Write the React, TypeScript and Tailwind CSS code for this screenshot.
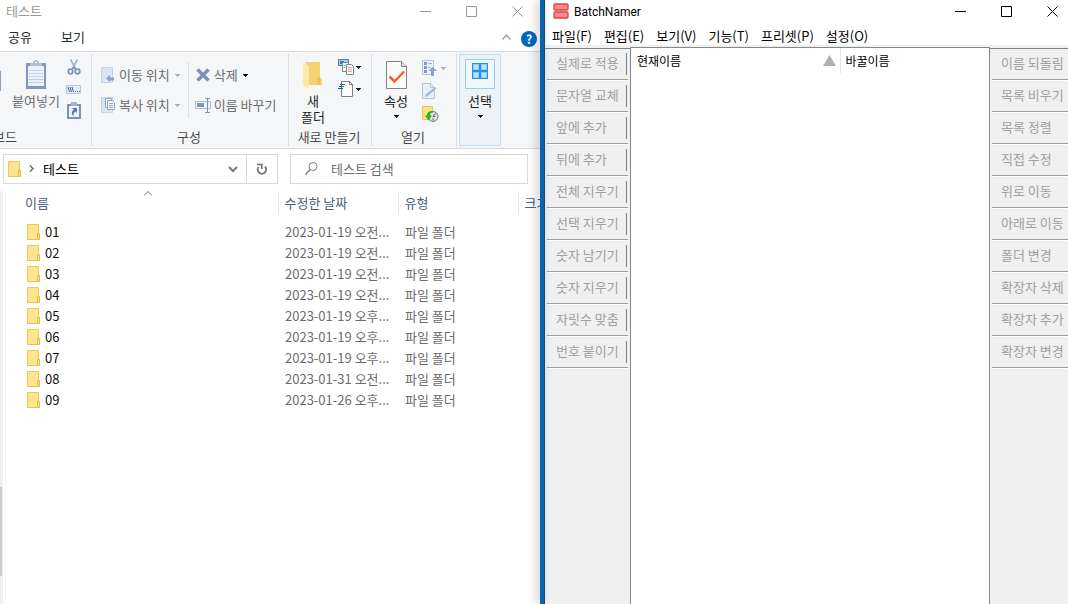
import type { ReactNode } from "react";

type FileRow = {
  name: string;
  date: string;
};

const FILES: FileRow[] = [
  { name: "01", date: "2023-01-19 오전..." },
  { name: "02", date: "2023-01-19 오전..." },
  { name: "03", date: "2023-01-19 오전..." },
  { name: "04", date: "2023-01-19 오전..." },
  { name: "05", date: "2023-01-19 오후..." },
  { name: "06", date: "2023-01-19 오후..." },
  { name: "07", date: "2023-01-19 오후..." },
  { name: "08", date: "2023-01-31 오전..." },
  { name: "09", date: "2023-01-26 오후..." },
];

const MENUS = ["파일(F)", "편집(E)", "보기(V)", "기능(T)", "프리셋(P)", "설정(O)"];

const LEFT_ACTIONS = [
  "실제로 적용",
  "문자열 교체",
  "앞에 추가",
  "뒤에 추가",
  "전체 지우기",
  "선택 지우기",
  "숫자 남기기",
  "숫자 지우기",
  "자릿수 맞춤",
  "번호 붙이기",
];

const RIGHT_ACTIONS = [
  "이름 되돌림",
  "목록 비우기",
  "목록 정렬",
  "직접 수정",
  "위로 이동",
  "아래로 이동",
  "폴더 변경",
  "확장자 삭제",
  "확장자 추가",
  "확장자 변경",
];

function WindowButtons() {
  return (
    <div className="flex gap-4">
      <button aria-label="최소화" className="flex h-[22px] w-[30px] items-center justify-center">
        <svg width="11" height="11" stroke="currentColor" fill="none"><path d="M0 5.5h11" /></svg>
      </button>
      <button aria-label="최대화" className="flex h-[22px] w-[30px] items-center justify-center">
        <svg width="11" height="11" stroke="currentColor" fill="none"><path d="M.5 .5h10v10h-10z" /></svg>
      </button>
      <button aria-label="닫기" className="flex h-[22px] w-[30px] items-center justify-center">
        <svg width="11" height="11" stroke="currentColor" fill="none"><path d="M.5 .5l10 10M10.5 .5l-10 10" /></svg>
      </button>
    </div>
  );
}

function DropArrow({ className = "" }: { className?: string }) {
  return (
    <svg width="5" height="3" className={`shrink-0 ${className}`} fill="currentColor" shapeRendering="crispEdges">
      <path d="M0 0h5v1H0zM1 1h3v1H1zM2 2h1v1H2z" />
    </svg>
  );
}

function RibbonGroup({ label, className = "", children }: { label: string; className?: string; children: ReactNode }) {
  return (
    <div className={`flex shrink-0 flex-col border-r border-[#dcdfe2] ${className}`}>
      <div className="flex h-[75px] items-start">{children}</div>
      <div className="pr-[2px] text-center leading-4 text-[#4a4a4a]">{label}</div>
    </div>
  );
}

function FolderIcon() {
  return (
    <svg width="14" height="16" viewBox="0 0 14 16" className="shrink-0">
      <path d="M.5 .5h11v15H.5z" fill="#ffe591" stroke="#eccb55" />
      <path d="M10.5 9.5h2v6h-2z" fill="#ffe38a" stroke="#e3bb3e" />
      <path d="M.5 15.5h12" stroke="#e9c44c" />
    </svg>
  );
}

function ClipboardIcon() {
  return (
    <svg width="20" height="29" viewBox="0 0 20 29">
      <path d="M0 3h20v26H0z" fill="#8196bd" />
      <path d="M2 6h16v20H2z" fill="#eaf2fb" />
      <path d="M3 10.5h14M3 13.5h14M3 16.5h14M3 19.5h14M3 22.5h14" stroke="#c3d3ea" />
      <path d="M4 6V3h3c0-4 6-4 6 0h3v3z" fill="#b3bfd2" />
      <path d="M9 2h2v1H9z" fill="#fff" />
    </svg>
  );
}

function ScissorsIcon() {
  return (
    <svg width="14" height="16" viewBox="0 0 14 16" fill="none">
      <path d="M3.5 .5l5 9M10.5 .5l-5 9" stroke="#9fb0cb" strokeWidth="1.6" />
      <circle cx="3.5" cy="12.5" r="2.3" stroke="#7c91b6" strokeWidth="1.7" />
      <circle cx="10.5" cy="12.5" r="2.3" stroke="#7c91b6" strokeWidth="1.7" />
      <path d="M5 10.5l2-2 2 2" stroke="#7c91b6" strokeWidth="1.5" />
    </svg>
  );
}

function PathIcon() {
  return (
    <svg width="15" height="9" viewBox="0 0 15 9">
      <path d="M.5 .5h14v8H.5z" fill="#e3edf9" stroke="#b7c9e2" />
      <path d="M2 2l1.500 5M4 2l1.500 5M6 2l1.500 5" stroke="#4a6694" fill="none" />
      <path d="M9 6h1v1H9zM11 6h1v1h-1zM13 6h1v1h-1z" fill="#4a6694" />
    </svg>
  );
}

function PasteShortcutIcon() {
  return (
    <svg width="14" height="17" viewBox="0 0 14 17">
      <path d="M0 2h14v15H0z" fill="#7c92b9" />
      <path d="M2 4h10v11H2z" fill="#eaf2fb" />
      <path d="M4 0h6v4H4z" fill="#a4b3cc" />
      <path d="M5 6h5v5L8.5 9.5C7 10.500 6.500 11.500 6.500 14 4 12 4.500 9 6.800 7.800z" fill="#5f79a8" />
    </svg>
  );
}

function MoveToIcon() {
  return (
    <svg width="14" height="16" viewBox="0 0 14 16">
      <path d="M.5 .5h11v15H.5z" fill="#dbe6f5" stroke="#c5d4e9" />
      <path d="M5 11.5L9 8v2.5h4v3H9V15z" fill="#8ba0c4" />
    </svg>
  );
}

function CopyToIcon() {
  return (
    <svg width="14" height="16" viewBox="0 0 14 16">
      <path d="M.5 .5h11v15H.5z" fill="#dbe6f5" stroke="#c5d4e9" />
      <path d="M4.5 1.5h6v9h-6z" fill="#f3f7fc" stroke="#92a6c7" />
      <path d="M6.5 3.5h5l2 2v7h-7z" fill="#f3f7fc" stroke="#92a6c7" />
      <path d="M8 6.5h4M8 8.5h4M8 10.5h4" stroke="#92a6c7" />
    </svg>
  );
}

function DeleteIcon() {
  return (
    <svg width="14" height="14" viewBox="0 0 14 14">
      <path d="M1.5 1.5l11 11M12.5 1.5l-11 11" stroke="#7d91b5" strokeWidth="3.5" />
    </svg>
  );
}

function RenameIcon() {
  return (
    <svg width="16" height="15" viewBox="0 0 16 15" fill="none">
      <path d="M.5 3.5h15v7H.5z" fill="#edf3fa" stroke="#a9bad5" />
      <path d="M2 5h7v4H2z" fill="#7f96bf" />
      <path d="M12.5 1v13M10 .5h5M10 14.5h5" stroke="#7f93b8" />
    </svg>
  );
}

function BigFolderIcon() {
  return (
    <svg width="20" height="28" viewBox="0 0 20 28">
      <path d="M3 1h14v15l2 3v5H3z" fill="#f5d271" />
      <path d="M0 1l6 5v22l-6-4z" fill="#ffe9a9" />
      <path d="M14 16h3v8h-3z" fill="#efc456" />
    </svg>
  );
}

function NewItemIcon() {
  return (
    <svg width="16" height="16" viewBox="0 0 16 16">
      <path d="M.5 .5h10v6H.5z" fill="#9bd3f3" stroke="#4b7f9e" />
      <path d="M2 2h4v3H2z" fill="#2f82b5" />
      <path d="M4.5 3.5h6v9h-6z" fill="#fff" stroke="#858585" />
      <path d="M8.5 5.5h5l2 2v8h-7z" fill="#fff" stroke="#858585" />
      <path d="M10 8.5h4M10 10.5h4M10 12.5h4" stroke="#e8a196" />
      <path d="M5.5 6.5h2M5.5 8.5h2" stroke="#7ba8d0" />
    </svg>
  );
}

function EasyAccessIcon() {
  return (
    <svg width="16" height="16" viewBox="0 0 16 16">
      <path d="M3.5 .5h8l3 3v12h-11z" fill="#fbfbfb" stroke="#7d7d7d" />
      <path d="M11.5 .5v3h3" fill="none" stroke="#7d7d7d" />
      <path d="M2 3.5h5M1 5.5h5M0 7.5h5" stroke="#1d5fa3" strokeWidth="1.2" />
    </svg>
  );
}

function PropertiesIcon() {
  return (
    <svg width="21" height="28" viewBox="0 0 21 28">
      <path d="M.5 .5h15l5 5v22H.5z" fill="#fcfcfc" stroke="#838383" />
      <path d="M15.5 .5v5h5" fill="#e3e3e3" stroke="#838383" />
      <path d="M3.5 15.5l5 5L18 10.5" fill="none" stroke="#f4611c" strokeWidth="2.5" />
    </svg>
  );
}

function OpenIcon() {
  return (
    <svg width="16" height="16" viewBox="0 0 16 16">
      <path d="M.5 .5h11v14H.5z" fill="#eaf1fa" stroke="#b4c4dc" />
      <path d="M2 2h3v3H2zM2 6h3v3H2zM2 10h3v3H2z" fill="#8499bf" />
      <path d="M6 3.5h4M6 7.5h3" stroke="#a3b4cf" />
      <path d="M10.5 7L15 11h-3v5H9v-5H6.5z" fill="#8fa2c4" />
    </svg>
  );
}

function EditIcon() {
  return (
    <svg width="16" height="16" viewBox="0 0 16 16">
      <path d="M.5 .5h8l4 4v11H.5z" fill="#e8f0fa" stroke="#b4c4dc" />
      <path d="M8.500 .5v4h4" fill="none" stroke="#b4c4dc" />
      <path d="M3 14l1-3 9-7 1.500 1.500L6 13z" fill="#a9bad6" />
    </svg>
  );
}

function HistoryIcon() {
  return (
    <svg width="17" height="16" viewBox="0 0 17 16">
      <path d="M.5 .5h10v13H.5z" fill="#ffe184" stroke="#e8c552" />
      <circle cx="11" cy="10.5" r="5" fill="#e0e0e0" stroke="#777" />
      <path d="M11 10.5l2.500-3M11 10.500h2M11 12.500v2" stroke="#555" />
      <path d="M11 5C7 4.500 5 6.500 4.800 9.500H3l3.500 5 3.500-5H8C8 7.500 9 6.500 11 6.500z" fill="#27b22f" />
    </svg>
  );
}

function SelectGridIcon() {
  return (
    <svg width="16" height="16" viewBox="0 0 16 16" className="shrink-0">
      <path d="M0 0h16v16H0z" fill="#2c8ede" />
      <path d="M1 1h6v6H1zM9 1h6v6H9zM1 9h6v6H1zM9 9h6v6H9z" fill="#8fcef8" />
      <path d="M2 2h4v4H2zM10 2h4v4h-4zM2 10h4v4H2zM10 10h4v4h-4z" fill="#bce3fd" />
    </svg>
  );
}

function Ribbon() {
  return (
    <div className="flex h-[98px] overflow-hidden border-y border-[#dadbdc] bg-[#f4f6f8] py-[2px] text-[#6d6d6d]">
      {/* Clipboard, cut off by the edge of the screen */}
      <div className="flex w-[92px] shrink-0 flex-col border-r border-[#dcdfe2]">
        <div className="flex h-[75px] items-start">
          <div className="mt-[17px] h-5 w-px bg-[#8ba0c4]" />
          <button className="ml-[11px] flex w-12 shrink-0 flex-col items-center pt-[6px] leading-4 whitespace-nowrap">
            <ClipboardIcon />
            <span className="mt-1">붙여넣기</span>
          </button>
          <div className="ml-[6px] flex flex-col items-center pt-[5px]">
            <button aria-label="잘라내기"><ScissorsIcon /></button>
            <button aria-label="경로 복사" className="mt-[10px]"><PathIcon /></button>
            <button aria-label="바로 가기 붙여넣기" className="mt-2"><PasteShortcutIcon /></button>
          </div>
        </div>
        <div className="flex w-[17px] justify-end overflow-hidden leading-4 whitespace-nowrap text-[#4a4a4a]">보드</div>
      </div>

      <RibbonGroup label="구성" className="w-[197px]">
        <div className="flex flex-col gap-[14px] pt-[13px] pl-[9px] leading-4">
          <button className="flex items-center">
            <MoveToIcon />
            <span className="ml-1">이동 위치</span>
            <DropArrow className="ml-[5px] text-[#b0b0b0]" />
          </button>
          <button className="flex items-center">
            <CopyToIcon />
            <span className="ml-1">복사 위치</span>
            <DropArrow className="ml-[5px] text-[#b0b0b0]" />
          </button>
        </div>
        <div className="mt-2 ml-2 h-14 w-px bg-[#dcdfe2]" />
        <div className="flex flex-col gap-[14px] pt-[13px] pl-[6px] leading-4 whitespace-nowrap">
          <button className="flex items-center">
            <span className="flex w-4 justify-center"><DeleteIcon /></span>
            <span className="ml-[3px]">삭제</span>
            <DropArrow className="ml-[5px] text-black" />
          </button>
          <button className="flex items-center">
            <RenameIcon />
            <span className="ml-[3px]">이름 바꾸기</span>
          </button>
        </div>
      </RibbonGroup>

      <RibbonGroup label="새로 만들기" className="w-[83px] text-[#1e1e1e]">
        <button className="ml-3 flex w-6 flex-col items-center pt-[7px] leading-4">
          <BigFolderIcon />
          <span className="mt-1 w-7 text-center">새<br />폴더</span>
        </button>
        <div className="ml-[13px] flex flex-col gap-[6px] pt-[5px]">
          <button aria-label="새 항목" className="flex items-center gap-[2px]">
            <NewItemIcon />
            <DropArrow />
          </button>
          <button aria-label="빠른 연결" className="flex items-center gap-[2px]">
            <EasyAccessIcon />
            <DropArrow />
          </button>
        </div>
      </RibbonGroup>

      <RibbonGroup label="열기" className="w-[85px] text-[#1e1e1e]">
        <button className="ml-3 flex w-6 flex-col items-center pt-[7px] leading-4">
          <PropertiesIcon />
          <span className="mt-1 whitespace-nowrap">속성</span>
          <DropArrow className="mt-[6px]" />
        </button>
        <div className="ml-[14px] flex flex-col gap-[7px] pt-[6px]">
          <button aria-label="열기" className="flex items-center gap-[3px]">
            <OpenIcon />
            <DropArrow className="text-[#b0b0b0]" />
          </button>
          <button aria-label="편집"><EditIcon /></button>
          <button aria-label="히스토리"><HistoryIcon /></button>
        </div>
      </RibbonGroup>

      <button className="ml-[2px] flex w-[42px] shrink-0 flex-col items-center border border-[#c3def6] bg-[#edf2f6] pt-1 leading-4 text-[#1e1e1e]">
        <span className="flex h-[30px] w-[30px] justify-center border border-[#9bcbf7] bg-[#f0f7fd] pt-[3px]">
          <SelectGridIcon />
        </span>
        <span className="mt-1">선택</span>
        <DropArrow className="mt-[6px]" />
      </button>
    </div>
  );
}

function AddressBar() {
  return (
    <div className="flex h-[30px] gap-3 pr-3 pl-[3px]">
      <div className="flex min-w-0 flex-1 border border-[#d9d9d9]">
        <div className="flex min-w-0 flex-1 items-center pb-px pl-1">
          <FolderIcon />
          <svg width="5" height="7" className="ml-[7px]" fill="none" stroke="#6b6b6b" strokeWidth="1.5"><path d="M1 .5l3 3-3 3" /></svg>
          <span className="ml-[9px] leading-4 text-black">테스트</span>
        </div>
        <button aria-label="이전 위치" className="flex w-7 items-center justify-center border-r border-[#d9d9d9]">
          <svg width="10" height="7" fill="none" stroke="#777" strokeWidth="2"><path d="M1 1l4 4 4-4" /></svg>
        </button>
        <button aria-label="새로 고침" className="flex w-[30px] items-center justify-center">
          <svg width="12" height="12" viewBox="0 0 12 12" fill="none" stroke="#707070" strokeWidth="1.8">
            <path d="M2.500 4A4.200 4.200 0 1 0 9 3.600" />
            <path d="M1 1.500h4.800V6" strokeWidth="1.600" />
          </svg>
        </button>
      </div>
      <label className="flex w-[238px] items-center border border-[#d9d9d9] pb-px pl-[14px]">
        <svg width="13" height="13" viewBox="0 0 13 13" fill="none" stroke="#7d7d7d" className="shrink-0">
          <circle cx="8" cy="4.5" r="4" />
          <path d="M5 7.5L.5 12.5" strokeWidth="1.3" />
        </svg>
        <input aria-label="테스트 검색" placeholder="테스트 검색" className="ml-[13px] w-full min-w-0 leading-4 outline-none placeholder:text-[#6d6d6d]" />
      </label>
    </div>
  );
}

function FileTable() {
  return (
    <table className="w-full table-fixed border-collapse text-left whitespace-nowrap">
      <colgroup>
        <col />
        <col className="w-[120px]" />
        <col className="w-[120px]" />
        <col className="w-[22px]" />
      </colgroup>
      <thead className="text-[#4c607a]">
        <tr className="h-6">
          <th className="relative border-r border-[#e5e5e5] p-0 pl-[7px] font-normal">
            <svg width="9" height="5" className="absolute top-0 left-1/2 -translate-x-1/2" fill="none" stroke="#6b6b6b"><path d="M.5 4.5l4-4 4 4" /></svg>
            이름
          </th>
          <th className="border-r border-[#e5e5e5] p-0 pl-[6px] font-normal">수정한 날짜</th>
          <th className="border-r border-[#e5e5e5] p-0 pl-[6px] font-normal">유형</th>
          <th className="p-0 pl-[6px] font-normal">크기</th>
        </tr>
      </thead>
      <tbody className="text-[#6d6d6d] before:block before:h-[6px]">
        {FILES.map((file) => (
          <tr key={file.name} className="h-[21px]">
            <td className="p-0 pl-[9px]">
              <div className="flex items-center gap-1 text-[#111]">
                <FolderIcon />
                {file.name}
              </div>
            </td>
            <td className="p-0 pl-[7px]">{file.date}</td>
            <td className="p-0 pl-[7px]">파일 폴더</td>
            <td />
          </tr>
        ))}
      </tbody>
    </table>
  );
}

function ExplorerWindow() {
  return (
    <section className="flex min-w-0 flex-[540_1_0%] flex-col overflow-hidden bg-white">
      <header className="flex h-[22px] items-center justify-between pr-2 pl-[6px] text-[#999]">
        <span>테스트</span>
        <WindowButtons />
      </header>
      <div className="flex h-[29px] items-center pr-[3px] pl-2 text-[#2b2b2b]">
        <button>공유</button>
        <button className="ml-[29px]">보기</button>
        <button aria-label="리본 최소화" className="ml-auto">
          <svg width="9" height="6" fill="none" stroke="#9a9a9a" strokeWidth="1.3"><path d="M.5 5.5l4-4.500 4 4.500" /></svg>
        </button>
        <button className="mt-1 ml-[10px] flex h-4 w-4 items-center justify-center rounded-full bg-[#0067c0] text-xs font-bold text-white">?</button>
      </div>
      <Ribbon />
      <div className="pt-[5px]">
        <AddressBar />
      </div>
      <div className="mt-[7px] flex flex-1">
        {/* Edge of the navigation pane with its scrollbar */}
        <div className="w-[3px] bg-[#f0f0f0] pt-[296px]">
          <div className="h-[89px] w-[2px] bg-[#cdcdcd]" />
        </div>
        <div className="ml-[2px] w-px bg-[#f3f3f3]" />
        <div className="min-w-0 flex-1 overflow-hidden pl-3">
          <FileTable />
        </div>
      </div>
    </section>
  );
}

function ActionList({ items, className = "" }: { items: string[]; className?: string }) {
  return (
    <div className={`shrink-0 overflow-hidden bg-[#f0f0f0] pt-px ${className}`}>
      <div className="h-px bg-[#808080]" />
      {items.map((item) => (
        <div key={item} className="ml-[2px] h-8 w-[81px] border-b border-white">
          <button className="flex h-[31px] w-full items-center border-b border-[#a0a0a0] pr-px pl-[9px] text-left text-[#a0a0a0]">
            <span className="h-[22px] flex-1 border-r border-[#808080] pt-[2px] leading-4 whitespace-nowrap">{item}</span>
          </button>
        </div>
      ))}
    </div>
  );
}

function BatchNamerWindow() {
  return (
    <section className="flex min-w-0 flex-[523_1_0%] flex-col overflow-hidden bg-white text-black">
      <header className="flex h-[22px] items-center pr-px pl-2">
        <svg width="16" height="16" viewBox="0 0 16 16" fill="#fe8a8a" stroke="#d9434a" strokeWidth="1.3">
          <rect x="1" y="1" width="14" height="6" rx="1" />
          <rect x="1" y="9" width="14" height="6" rx="1" />
        </svg>
        <h1 className="ml-[5px] pt-[2px] font-[Roboto,sans-serif] text-xs">BatchNamer</h1>
        <div className="ml-auto">
          <WindowButtons />
        </div>
      </header>
      <nav className="flex h-[25px] items-center gap-3 border-b-2 border-[#f0f0f0] pt-1 pl-[7px] whitespace-nowrap">
        {MENUS.map((menu) => (
          <button key={menu} className="leading-4">{menu}</button>
        ))}
      </nav>
      <div className="flex flex-1">
        <ActionList items={LEFT_ACTIONS} className="w-[85px]" />
        <div className="min-w-0 flex-1 border-x border-t border-[#828790] bg-white">
          <table className="w-full table-fixed border-collapse text-left text-xs">
            <thead>
              <tr className="h-[25px]">
                <th className="w-[209px] border-r border-[#e5e5e5] p-0 pr-1 pl-[6px] font-normal">
                  <div className="flex items-center justify-between">
                    현재이름
                    <svg width="13" height="11" fill="#b0b0b0"><path d="M6.5 0L13 11H0z" /></svg>
                  </div>
                </th>
                <th className="p-0 pl-[5px] font-normal">바꿀이름</th>
              </tr>
            </thead>
          </table>
        </div>
        <ActionList items={RIGHT_ACTIONS} className="w-[78px]" />
      </div>
    </section>
  );
}

export default function App() {
  return (
    <main className="flex min-h-screen font-['Noto_Sans_CJK_KR',sans-serif] text-[13px] leading-4">
      <ExplorerWindow />
      {/* Strip of desktop between the two windows */}
      <div className="relative w-[5px] shrink-0 border-r border-[#1b4668] bg-[#0a63ac] shadow-[-3px_0_9px_rgba(0,0,0,0.25)]" />
      <BatchNamerWindow />
    </main>
  );
}
